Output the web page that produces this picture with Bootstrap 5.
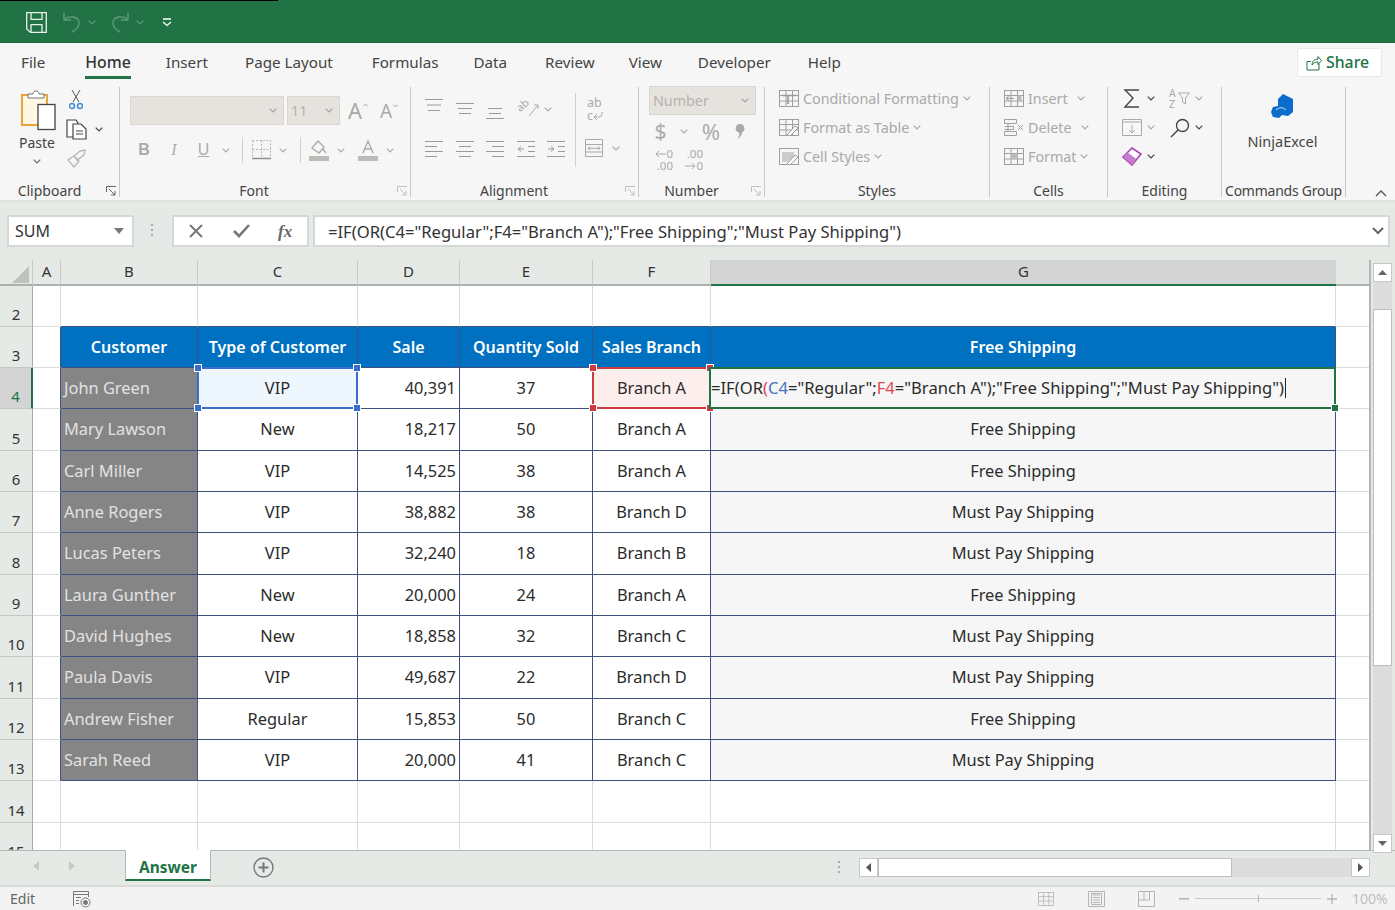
<!DOCTYPE html>
<html lang="en"><head><meta charset="utf-8"><title>Excel</title>
<link href="https://cdn.jsdelivr.net/npm/bootstrap@5.3.0/dist/css/bootstrap.min.css" rel="stylesheet">
<style>
html,body{margin:0;height:910px;overflow:hidden;background:#f6f6f6}
body{font-family:"Noto Sans","Open Sans",sans-serif;color:#444;width:1395px}
svg{display:block;flex:none}
.g1{margin-left:1px}.g2{margin-left:2px}.g3{margin-left:3px}.g4{margin-left:4px}.g5{margin-left:5px}.g8{margin-left:8px}.g9{margin-left:9px}.g10{margin-left:10px}.g12{margin-left:12px}.g13{margin-left:13px}.g14{margin-left:14px}.g18{margin-left:18px}.g19{margin-left:19px}
.xl-title{height:43px;background:#217346;border-bottom:1px solid #1c6a3f}
.xl-blk{height:1px;width:278px;background:#000}
.xl-tbar{padding:11px 0 0 26px;height:42px}
.xl-tabs{height:42px}
.xl-tab{position:relative;font-size:15.2px;color:#444;line-height:20px;margin-top:9px;height:29px}
.xl-tab.on{color:#333;font-weight:500;font-size:15.8px}
.xl-tab.on::after{content:"";position:absolute;left:0;right:0;top:24px;height:3px;background:#217346}
.t1{margin-right:40px}.t2{margin-right:35px}.t3{margin-right:37px}.t4{margin-right:39px}.t5{margin-right:35px}.t6{margin-right:38px}.t7{margin-right:34px}.t8{margin-right:36px}.t9{margin-right:37px}
.xl-share{width:85px;height:29px;margin:5px 13px 0 auto;padding-left:8px;background:#fff;border:1px solid #e9e9e9;color:#217346;font-size:15.8px;font-weight:500;border-radius:2px}
.xl-ribbon{height:117px;padding-top:2px;border-bottom:2px solid #dfe2df}
.rgrp{height:110px;border-right:1.5px solid #c8c8c4;flex:none}
.w1{width:120px}.w2{width:291px}.w3{width:228px}.w4{width:126px}.w5{width:225px}.w6{width:118px}.w7{width:114px}.w8{width:124px}
.rbody{height:94px;flex:none}
.rlabel{height:16px;line-height:20px;font-size:14px;color:#444;text-align:center;position:relative;white-space:nowrap}
.pr20{padding-right:20px}.pr22{padding-right:22px}.pr21{padding-right:21px}
.launch{position:absolute;right:2px;top:5px}
.rrows{margin-top:-3px;height:97px}
.rrow{height:29px}
.clip-rows{margin-top:-2px}
.clip-rows .rrow{height:29.5px}
.dis{color:#a9a9a9;font-size:14.3px;line-height:20px;white-space:nowrap}
.combo{height:29px;background:#e6e3df;border:1px solid #dad7d3;color:#b5b2ae;font-size:14.3px;padding:0 6px 0 3px}
.c154{width:154px;margin:9px 0 0 10px}.c53{width:53px;margin:9px 0 0 3px}.c106{width:107px;margin:-1px 0 0 10px}
.glyph{color:#ababab;text-align:center;line-height:20px}
.dec{font-size:11.5px;line-height:12px;color:#aaa;white-space:nowrap;width:21px}
.wrapg{width:19px;height:26px;font-size:12.5px;line-height:13px;color:#aaa;white-space:nowrap}
.rot{display:block;font-size:11px;line-height:12px;color:#aaa;transform:rotate(-40deg);width:13px;flex:none}
.azc{font-size:10.5px;line-height:11px;color:#aaa;width:9px;flex:none}
.xl-bar{height:58px;background:#e6eae6;padding:13px 0 0 7px}
.xl-box{height:32px;background:#fff;border:2px solid #d5d9d5;font-size:16px;color:#333;line-height:27px}
.nbox{width:127px;padding-left:6px}
.fbox{width:137px}
.ibox{width:1077px;padding-left:13px;font-size:16.6px}
.vsep{width:1px;background:#cfcfcb}
.xl-main{height:590px;background:#e6eae6}
.xl-wrap{width:1371px;height:590px;overflow:hidden;border-right:2px solid #b4b6b4;background:#fff}
.sheet-tbl{width:1370px;table-layout:fixed;border-collapse:separate;border-spacing:0;font-size:16.4px;color:#2b2b2b;background:#fff}
.sheet-tbl th,.sheet-tbl td{padding:0;height:41px;border-right:1px solid #dcdcdc;border-bottom:1px solid #dcdcdc;text-align:center;white-space:nowrap;position:relative}
.sheet-tbl tr.t42>*{height:42px}
.sheet-tbl thead th{height:26px;padding-bottom:3px;background:#e6eae6;font-weight:400;font-size:15px;color:#333;border-right:1px solid #c8cac8;border-bottom:2px solid #aeb0ae;line-height:20px}
.sheet-tbl thead th.gh{background:#d4d4d4;border-bottom:2px solid #217346;border-right:0}
.sheet-tbl thead th.hh{border-right:0}
.sheet-tbl th.rn{background:#e6eae6;font-weight:400;font-size:15px;color:#333;border-right:1px solid #a9aba9;border-bottom:1px solid #c6c8c6;vertical-align:bottom;line-height:22px;padding-bottom:1px}
.sheet-tbl th.rn.sel{background:#d4d4d4;color:#217346;border-right:2px solid #217346}
.sheet-tbl td.ed{border-right:1px solid #3d5080}
.sheet-tbl td.eb{border-bottom:1px solid #3d5080}
.sheet-tbl td.hd{background:#0070c0;color:#fff;font-weight:600;font-size:16px;border-right:1px solid #3d5080;border-bottom:1px solid #3d5080}
.sheet-tbl td.hd:last-of-type{border-right:0}
.sheet-tbl td.nm{background:#858585;color:#e2e2e2;text-align:left;padding-left:3px;border-right:1px solid #3d5080;border-bottom:1px solid #3d5080}
.sheet-tbl td.dc{border-right:1px solid #3d5080;border-bottom:1px solid #3d5080}
.sheet-tbl td.sl{background:#f6f6f6}
.sheet-tbl td.rt{text-align:right;padding-right:3px}
.ovl{position:absolute;left:-1px;right:-1px;top:-1px;bottom:-1px;display:flex;align-items:center;justify-content:center;border:2px solid;z-index:2}
.ovb{border-color:#3a6fc9;background:#eef6fe}
.ovr{border-color:#cf3a40;background:#fdeeee}
.ovg{left:-2px;border-color:#217346;background:#f6f6f6;justify-content:flex-start;z-index:3;font-size:16.6px}
.hdl{position:absolute;width:8px;height:8px;border:1px solid #fff;z-index:4}
.ovb .hdl{background:#3a6fc9}.ovr .hdl{background:#cf3a40}.ovg .hdl{background:#217346}
.tl{left:-5px;top:-5px}.tr{right:-5px;top:-5px}.bl{left:-5px;bottom:-5px}.br{right:-5px;bottom:-5px}
.rb{color:#4472c4}.rr{color:#e0484d}.cursr{display:inline-block;width:1px;height:20px;background:#222;margin-left:1px;vertical-align:-4px}
.vsb{width:22px;margin-left:2px;height:590px;padding-top:3px}
.sbtn{width:19px;height:19px;background:#fff;border:1px solid #c6c8c6;flex:none}
.strack{background:#dcdcdc;width:19px;height:552px;flex:none;padding-top:27px}
.sthumb{width:19px;height:357px;background:#fff;border:1px solid #bcbebc}
.xl-sheets{height:35px;background:#e6eae6;border-top:1px solid #b4b6b4;border-bottom:0}
.stab{width:86px;height:31px;margin:-1px 0 0 0;background:#fff;border:1px solid #b4b6b4;border-top-color:#fff;border-bottom:2px solid #217346;color:#217346;font-weight:700;font-size:15.5px;line-height:32px;text-align:center}
.hsb{width:511px;height:19px;margin-top:7px;margin-left:16px}
.hthumb{width:355px;height:19px;background:#fff;border:1px solid #bcbebc}
.htrack{width:120px;height:19px;background:#dcdcdc}
.xl-status{height:25px;background:#f3f3f3;border-top:2px solid #d9dcd9;font-size:14px;color:#666;line-height:22px;padding-left:10px}
.zm{color:#bdbdbd;font-size:14px;margin-left:15px}
.sld{width:126px;height:1px;background:#c9c9c9;position:relative}
.sld i{position:absolute;left:63px;top:-3px;width:1px;height:7px;background:#b5b5b5}
</style></head><body>
<svg width="0" height="0" class="position-absolute"><defs>
<symbol id="car" viewBox="0 0 8 5"><path d="M.7.7 4 4 7.3.7" fill="none" stroke="currentColor" stroke-width="1.2"/></symbol>
<symbol id="atop" viewBox="0 0 18 24"><path d="M0 3.500h18M2 9h14M3 14.500h12" stroke="currentColor" fill="none"/></symbol>
<symbol id="amid" viewBox="0 0 18 24"><path d="M0 7.500h18M2 12.500h14M3 17.500h12" stroke="currentColor" fill="none"/></symbol>
<symbol id="abot" viewBox="0 0 18 24"><path d="M2 12.500h14M3 17.500h12M0 22.500h18" stroke="currentColor" fill="none"/></symbol>
<symbol id="al" viewBox="0 0 18 20"><path d="M0 2.500h18M0 7.500h12M0 12.500h18M0 17.500h12" stroke="currentColor" fill="none"/></symbol>
<symbol id="ac" viewBox="0 0 18 20"><path d="M0 2.500h18M3 7.500h12M0 12.500h18M3 17.500h12" stroke="currentColor" fill="none"/></symbol>
<symbol id="ar" viewBox="0 0 18 20"><path d="M0 2.500h18M6 7.500h12M0 12.500h18M6 17.500h12" stroke="currentColor" fill="none"/></symbol>
<symbol id="tbl" viewBox="0 0 20 17"><rect x=".5" y=".5" width="19" height="16" fill="none" stroke="currentColor"/><path d="M.5 5.500h19M.5 11h19M7 .5v16M13.500.5v16" stroke="currentColor" fill="none"/></symbol>
<symbol id="lnc" viewBox="0 0 11 11"><path d="M.5 6V.5H10M3 3l6 6M9 5v4H5" fill="none" stroke="currentColor"/></symbol>
</defs></svg>

<header class="xl-title">
<div class="xl-blk"></div>
<div class="xl-tbar d-flex align-items-start">
<svg width="21" height="21" viewBox="0 0 21 21" fill="none" stroke="#e8f0eb" stroke-width="1.3"><path d="M.7.7h19.600v19.600H4.500L.7 17z"/><path d="M5 .7v6.600h11V.7M5 20.300v-7.600h11v7.600"/></svg>
<svg class="g14" width="22" height="21" viewBox="0 0 22 21" fill="none" stroke="#5c9a7b" stroke-width="1.4"><path d="M3 1v7h7M3 8c4-5 15-4 15 3 0 4-3 7-7 9"/></svg>
<svg class="g5" style="color:#5c9a7b;margin-top:8px" width="8" height="5"><use href="#car"/></svg>
<svg class="g13" width="22" height="21" viewBox="0 0 22 21" fill="none" stroke="#5c9a7b" stroke-width="1.4"><path d="M19 1v7h-7M19 8c-4-5-15-4-15 3 0 4 3 7 7 9"/></svg>
<svg class="g5" style="color:#5c9a7b;margin-top:8px" width="8" height="5"><use href="#car"/></svg>
<svg class="g18" style="margin-top:6px" width="10" height="9" viewBox="0 0 10 9" fill="none" stroke="#fff" stroke-width="1.3"><path d="M1 1h8M1 4l4 3.500L9 4"/></svg>
</div>
</header>

<nav class="xl-tabs d-flex" style="padding-left:21px">
<span class="xl-tab t1">File</span><span class="xl-tab on t2">Home</span><span class="xl-tab t3">Insert</span><span class="xl-tab t4">Page Layout</span><span class="xl-tab t5">Formulas</span><span class="xl-tab t6">Data</span><span class="xl-tab t7">Review</span><span class="xl-tab t8">View</span><span class="xl-tab t9">Developer</span><span class="xl-tab">Help</span>
<div class="xl-share d-flex align-items-center gap-1">
<svg width="16" height="16" viewBox="0 0 16 16" fill="none" stroke="#217346"><path d="M1 6.500v8.500h12V9M1 6.500h4M6 10c0-4 3-6 6-6V1.500l3.500 4-3.500 4V7c-3 0-5 1-6 3z"/></svg>Share</div>
</nav>

<section class="xl-ribbon d-flex">
<div class="rgrp w1 d-flex flex-column">
<div class="rbody d-flex">
 <div class="d-flex flex-column align-items-center" style="margin-left:17px;width:40px">
  <svg class="g4" style="margin-top:3px" width="36" height="41" viewBox="0 0 36 41"><rect x="1" y="5" width="25" height="30" fill="#fff6e4" stroke="#e8a33d" stroke-width="2"/><path d="M7 8V4h5c0-4 6-4 6 0h5v4z" fill="#fff" stroke="#777"/><rect x="17" y="14.500" width="17" height="25" fill="#fff" stroke="#444" stroke-width="1.3"/></svg>
  <span style="font-size:14px;line-height:20px;margin-top:2px">Paste</span>
  <svg style="color:#666;margin-top:6px" width="8" height="5"><use href="#car"/></svg>
 </div>
 <div class="clip-rows g9">
  <div class="rrow d-flex align-items-center"><svg class="g3" width="14" height="21" viewBox="0 0 14 21" fill="none" stroke="#555"><path d="M3 1l7 12M11 1L4 13"/><circle cx="3" cy="17" r="2.500" stroke="#3f8fd6" stroke-width="1.500"/><circle cx="11" cy="17" r="2.500" stroke="#3f8fd6" stroke-width="1.500"/></svg></div>
  <div class="rrow d-flex align-items-center"><svg width="21" height="21" viewBox="0 0 21 21" fill="#fff" stroke="#444" stroke-width="1.200"><path d="M1 1h9l2 3v14H1z"/><path d="M7 5h8l5 5v10H7zM10 12h7M10 15h7"/></svg><svg class="g8" style="color:#444" width="8" height="5"><use href="#car"/></svg></div>
  <div class="rrow d-flex align-items-center"><svg class="g1" width="20" height="19" viewBox="0 0 20 19" fill="none" stroke="#b5b5b5" stroke-width="1.300"><path d="M13 2l5-1-1 5-7 5-3-4zM7 7L1 11l6 7 5-6z"/></svg></div>
 </div>
</div>
<div class="rlabel pr20">Clipboard<svg class="launch" style="color:#666" width="11" height="11"><use href="#lnc"/></svg></div>
</div>

<div class="rgrp w2 d-flex flex-column">
<div class="rbody">
 <div class="d-flex align-items-start">
  <div class="combo c154 d-flex align-items-center justify-content-end"><svg style="color:#a5a29e" width="8" height="5"><use href="#car"/></svg></div>
  <div class="combo c53 d-flex align-items-center justify-content-between">11<svg style="color:#a5a29e" width="8" height="5"><use href="#car"/></svg></div>
  <span class="glyph g8 d-flex" style="font-size:22px;margin-top:13px;width:19px;color:#a9a9a9">A<svg class="g1" style="margin-top:3px" width="5" height="4" viewBox="0 0 5 4" fill="none" stroke="#a9a9a9"><path d="M0 3.500 2.500 1 5 3.500"/></svg></span>
  <span class="glyph g13 d-flex" style="font-size:19px;margin-top:14px;width:17px;color:#a9a9a9">A<svg class="g1" style="margin-top:3px" width="5" height="4" viewBox="0 0 5 4" fill="none" stroke="#a9a9a9"><path d="M0 .5 2.500 3 5 .5"/></svg></span>
 </div>
 <div class="d-flex align-items-center" style="margin-top:15px;height:20px;padding-left:18px">
  <span class="glyph fw-bold" style="width:12px;font-size:16px;font-family:'Liberation Sans',sans-serif">B</span>
  <span class="glyph g19 fst-italic" style="width:10px;font-size:16px;font-family:'Liberation Serif',serif">I</span>
  <span class="glyph g18" style="width:13px;font-size:16px;text-decoration:underline;font-family:'Liberation Sans',sans-serif">U</span>
  <svg class="g12" style="color:#aaa" width="8" height="5"><use href="#car"/></svg>
  <span class="vsep g12" style="height:26px"></span>
  <svg class="g9" width="19" height="20" viewBox="0 0 19 20" fill="none" stroke="#b5b5b5"><path d="M.5.5h18v18H.5zM9.500.5v18M.5 9.500h18" stroke-dasharray="2 1.500"/><path d="M0 18.500h19" stroke="#8f8f8f" stroke-width="1.500"/></svg>
  <svg class="g8" style="color:#aaa" width="8" height="5"><use href="#car"/></svg>
  <span class="vsep g13" style="height:26px"></span>
  <svg class="g8" width="20" height="22" viewBox="0 0 20 22"><path d="M3 9l6-7 6 6-5 6z M14 10l3 4" fill="none" stroke="#aaa" stroke-width="1.300"/><rect y="17" width="20" height="5" fill="#bcbcb6"/></svg>
  <svg class="g8" style="color:#aaa" width="8" height="5"><use href="#car"/></svg>
  <svg class="g13" width="20" height="22" viewBox="0 0 20 22"><path d="M5 14 10 2l5 12M6.500 10h7" fill="none" stroke="#aaa" stroke-width="1.400"/><rect y="17" width="20" height="5" fill="#bcbcb6"/></svg>
  <svg class="g8" style="color:#aaa" width="8" height="5"><use href="#car"/></svg>
 </div>
</div>
<div class="rlabel pr22">Font<svg class="launch" style="color:#c0c0c0" width="11" height="11"><use href="#lnc"/></svg></div>
</div>

<div class="rgrp w3 d-flex flex-column">
<div class="rbody d-flex" style="padding-top:9px">
 <div style="width:164px;padding-left:14px;color:#9a9a9a">
  <div class="d-flex align-items-start" style="height:24px">
   <svg width="18" height="24"><use href="#atop"/></svg><svg class="g13" width="18" height="24"><use href="#amid"/></svg><svg class="g12" width="18" height="24"><use href="#abot"/></svg>
   <span class="rot g12" style="margin-top:3px">ab</span>
   <svg style="margin-top:3px" width="10" height="20" viewBox="0 0 10 20" fill="none" stroke="#aaa"><path d="M0 17 9 6M9 6H5M9 6v4"/></svg>
   <svg class="g5" style="color:#aaa;margin-top:11px" width="8" height="5"><use href="#car"/></svg>
  </div>
  <div class="d-flex align-items-start" style="margin-top:19px;height:20px">
   <svg width="18" height="20"><use href="#al"/></svg><svg class="g13" width="18" height="20"><use href="#ac"/></svg><svg class="g12" width="18" height="20"><use href="#ar"/></svg>
   <svg class="g13" width="18" height="20" viewBox="0 0 18 20" fill="none" stroke="currentColor"><path d="M0 2.500h18M11 7.500h7M11 12.500h7M0 17.500h18M7 10H1M4 7.500 1 10l3 2.500" /></svg>
   <svg class="g12" width="18" height="20" viewBox="0 0 18 20" fill="none" stroke="currentColor"><path d="M0 2.500h18M11 7.500h7M11 12.500h7M0 17.500h18M1 10h6M4 7.500 7 10l-3 2.500"/></svg>
  </div>
 </div>
 <span class="vsep" style="height:74px;margin-top:-3px"></span>
 <div class="g9">
  <div class="g2 wrapg" >ab<div class="d-flex align-items-center">c<svg width="10" height="8" viewBox="0 0 10 8" fill="none" stroke="#aaa"><path d="M9 0v2a3 3 0 0 1-3 3H1M1 5l3-3M1 5l3 3"/></svg></div></div>
  <div class="d-flex align-items-center" style="margin-top:17px">
   <svg width="18" height="18" viewBox="0 0 18 18" fill="none" stroke="#aaa"><path d="M.5.5h17v17H.5zM.5 5.500h17M.5 13h17M3 9.300h12M3 9.300l2-2M3 9.300l2 2M15 9.300l-2-2M15 9.300l-2 2"/></svg>
   <svg class="g9" style="color:#aaa" width="8" height="5"><use href="#car"/></svg>
  </div>
 </div>
</div>
<div class="rlabel pr21">Alignment<svg class="launch" style="color:#c0c0c0" width="11" height="11"><use href="#lnc"/></svg></div>
</div>

<div class="rgrp w4 d-flex flex-column">
<div class="rbody">
 <div class="combo c106 d-flex align-items-center justify-content-between">Number<svg style="color:#a5a29e" width="8" height="5"><use href="#car"/></svg></div>
 <div class="d-flex align-items-center" style="height:22px;margin-top:5px;padding-left:15px">
  <span class="glyph" style="font-size:21px;width:13px">$</span>
  <svg class="g13" style="color:#aaa" width="8" height="5"><use href="#car"/></svg>
  <span class="glyph g13" style="font-size:22px;width:20px">%</span>
  <svg class="g14" width="11" height="17" viewBox="0 0 11 17"><path d="M5 1a4.500 4.500 0 0 1 2 8.500C7 12 5 15 2 16c2-2 3-4 2-6.500A4.300 4.300 0 0 1 5 1z" fill="#a9a9a9"/></svg>
 </div>
 <div class="d-flex align-items-center" style="height:24px;margin-top:6px;padding-left:13px">
  <div class="dec"><div class="d-flex align-items-center justify-content-end"><svg width="11" height="8" viewBox="0 0 11 8" fill="none" stroke="#aaa"><path d="M11 4H1M1 4l3-3M1 4l3 3"/></svg>0</div><div class="text-end">.00</div></div>
  <div class="dec g9"><div class="text-end">.00</div><div class="d-flex align-items-center justify-content-end"><svg width="11" height="8" viewBox="0 0 11 8" fill="none" stroke="#aaa"><path d="M0 4h10M10 4 7 1M10 4 7 7"/></svg>0</div></div>
 </div>
</div>
<div class="rlabel pr20">Number<svg class="launch" style="color:#c0c0c0" width="11" height="11"><use href="#lnc"/></svg></div>
</div>

<div class="rgrp w5 d-flex flex-column">
<div class="rbody rrows" style="padding-left:14px">
 <div class="rrow d-flex align-items-center dis"><svg style="color:#a0a0a0" width="20" height="17" viewBox="0 0 20 17"><use href="#tbl"/><path d="M3 5.500h14M9 5.500V14" stroke="#999" stroke-width="1.600"/></svg><span class="g4">Conditional Formatting</span><svg class="g4" style="color:#aaa" width="8" height="5"><use href="#car"/></svg></div>
 <div class="rrow d-flex align-items-center dis"><svg style="color:#a0a0a0" width="20" height="17" viewBox="0 0 20 17"><use href="#tbl"/><path d="M8 16l8-9 3 2-8 8z" fill="#fff" stroke="#999"/></svg><span class="g4">Format as Table</span><svg class="g4" style="color:#aaa" width="8" height="5"><use href="#car"/></svg></div>
 <div class="rrow d-flex align-items-center dis"><svg style="color:#a0a0a0" width="20" height="17" viewBox="0 0 20 17"><rect x=".5" y=".5" width="19" height="16" fill="none" stroke="currentColor"/><path d="M.5.500h19M3 4h12v5l-7 5H3z" fill="#ccc"/><path d="M8 16l8-9 3 2-8 8z" fill="#fff" stroke="#999"/></svg><span class="g4">Cell Styles</span><svg class="g4" style="color:#aaa" width="8" height="5"><use href="#car"/></svg></div>
</div>
<div class="rlabel">Styles</div>
</div>

<div class="rgrp w6 d-flex flex-column">
<div class="rbody rrows" style="padding-left:14px">
 <div class="rrow d-flex align-items-center dis"><svg style="color:#a0a0a0" width="20" height="17" viewBox="0 0 20 17"><use href="#tbl"/><rect x="13.500" y="5.500" width="4" height="5.500" fill="#bbb"/><path d="M10 8.300H2M2 8.300l3-2.500M2 8.300l3 2.500" stroke="#999" fill="none"/></svg><span class="g4">Insert</span><svg class="g9" style="color:#aaa" width="8" height="5"><use href="#car"/></svg></div>
 <div class="rrow d-flex align-items-center dis"><svg style="color:#a0a0a0" width="20" height="17" viewBox="0 0 20 17"><path d="M.5.500h12v4h-12zM.5 12.500h12v4h-12zM4 4.500v8M.5 7.500h9v3h-9M14 6l5 5M19 6l-5 5" fill="none" stroke="currentColor"/></svg><span class="g4">Delete</span><svg class="g10" style="color:#aaa" width="8" height="5"><use href="#car"/></svg></div>
 <div class="rrow d-flex align-items-center dis"><svg style="color:#a0a0a0" width="20" height="17" viewBox="0 0 20 17"><use href="#tbl"/><rect x="7" y="5.500" width="6.500" height="5.500" fill="#bbb"/></svg><span class="g4">Format</span><svg class="g3" style="color:#aaa" width="8" height="5"><use href="#car"/></svg></div>
</div>
<div class="rlabel">Cells</div>
</div>

<div class="rgrp w7 d-flex flex-column">
<div class="rbody rrows" style="padding-left:14px">
 <div class="rrow d-flex align-items-center"><svg width="20" height="19" viewBox="0 0 20 19" fill="none" stroke="#444" stroke-width="1.400"><path d="M17 1H3l8 8-8 9h14"/></svg><svg class="g5" style="color:#444" width="8" height="5"><use href="#car"/></svg>
  <div class="azc g14">A<br>Z</div><svg width="12" height="13" viewBox="0 0 12 13" fill="none" stroke="#aaa"><path d="M.5 1h11l-4 5v6l-3-2V6z"/></svg><svg class="g5" style="color:#aaa" width="8" height="5"><use href="#car"/></svg></div>
 <div class="rrow d-flex align-items-center"><svg width="20" height="17" viewBox="0 0 20 17" fill="none" stroke="#aaa"><path d="M.5.500h19v16H.5zM.5 3h19M10 6v8M7 11l3 3 3-3"/></svg><svg class="g5" style="color:#aaa" width="8" height="5"><use href="#car"/></svg>
  <svg class="g14" width="21" height="20" viewBox="0 0 21 20" fill="none" stroke="#444" stroke-width="1.400"><circle cx="13.500" cy="7.500" r="6"/><path d="M9 12l-7 7"/></svg><svg class="g5" style="color:#444" width="8" height="5"><use href="#car"/></svg></div>
 <div class="rrow d-flex align-items-center"><svg width="20" height="19" viewBox="0 0 20 19"><path d="M1 10 10 1l9 6-9 11z" fill="#fff" stroke="#a83fb2" stroke-width="1.600"/><path d="M1 10 5.500 5.500l9 6.500L10 18z" fill="#c57ccb"/></svg><svg class="g5" style="color:#444" width="8" height="5"><use href="#car"/></svg></div>
</div>
<div class="rlabel">Editing</div>
</div>

<div class="rgrp w8 d-flex flex-column">
<div class="rbody d-flex flex-column align-items-center">
 <svg style="margin-top:7px;margin-left:-2px" width="24" height="26" viewBox="0 0 24 26"><path d="M12 0l10 5v13l-5 4-6-1-3 3-6-1-2-5 2-5 5-1V5z" fill="#0a6ccb"/><path d="M5 16c3-3 7-3 10 0" stroke="#fff" stroke-width=".8" fill="none"/></svg>
 <span style="font-size:14.500px;line-height:20px;margin-top:11px;margin-left:-2px">NinjaExcel</span>
</div>
<div class="rlabel" style="letter-spacing:-.25px">Commands Group</div>
</div>
<svg style="margin:103px 0 0 29px" width="12" height="7" viewBox="0 0 12 7" fill="none" stroke="#555" stroke-width="1.300"><path d="M1 6l5-5 5 5"/></svg>
</section>

<section class="xl-bar d-flex align-items-start">
 <div class="xl-box nbox d-flex justify-content-between align-items-center">SUM<svg class="me-2" width="10" height="6" viewBox="0 0 10 6"><path d="M0 0h10L5 6z" fill="#777"/></svg></div>
 <svg style="margin:9px 0 0 17px" width="3" height="14" viewBox="0 0 3 14" fill="#aaa"><rect width="2" height="2"/><rect y="5" width="2" height="2"/><rect y="10" width="2" height="2"/></svg>
 <div class="xl-box fbox d-flex align-items-center" style="margin-left:18px">
  <svg style="margin-left:15px" width="14" height="14" viewBox="0 0 14 14" stroke="#777" stroke-width="2"><path d="M1 1l12 12M13 1 1 13"/></svg>
  <svg style="margin-left:30px" width="17" height="14" viewBox="0 0 17 14" fill="none" stroke="#777" stroke-width="2.600"><path d="M1 7l5 5L16 1"/></svg>
  <span class="fst-italic" style="margin-left:28px;font-family:'Liberation Serif',serif;font-size:17px;color:#666;font-weight:700">fx</span>
 </div>
 <div class="xl-box ibox g4 d-flex justify-content-between align-items-center">=IF(OR(C4="Regular";F4="Branch A");"Free Shipping";"Must Pay Shipping")<svg class="me-1" width="12" height="8" viewBox="0 0 12 8" fill="none" stroke="#666" stroke-width="2"><path d="M1 1l5 5 5-5"/></svg></div>
</section>

<main class="xl-main d-flex">
<div class="xl-wrap">
<table class="sheet-tbl">
<colgroup><col width="33"><col width="28"><col width="137"><col width="160"><col width="102"><col width="133"><col width="118"><col width="625"><col width="34"></colgroup>
<thead><tr><th><svg style="position:absolute;left:12px;top:6px" width="17" height="17" viewBox="0 0 17 17"><path d="M17 0v17H0z" fill="#bfc3bf"/></svg></th><th>A</th><th>B</th><th>C</th><th>D</th><th>E</th><th>F</th><th class="gh">G</th><th class="hh"></th></tr></thead>
<tbody>
<tr><th class="rn">2</th><td></td><td class="eb"></td><td class="eb"></td><td class="eb"></td><td class="eb"></td><td class="eb"></td><td class="eb"></td><td></td></tr>
<tr><th class="rn">3</th><td class="ed"></td><td class="hd">Customer</td><td class="hd">Type of Customer</td><td class="hd">Sale</td><td class="hd">Quantity Sold</td><td class="hd">Sales Branch</td><td class="hd">Free Shipping</td><td></td></tr>
<tr><th class="rn sel">4</th><td class="ed"></td><td class="nm">John Green</td><td class="dc"><div class="ovl ovb">VIP<i class="hdl tl"></i><i class="hdl tr"></i><i class="hdl bl"></i><i class="hdl br"></i></div></td><td class="dc rt">40,391</td><td class="dc">37</td><td class="dc"><div class="ovl ovr">Branch A<i class="hdl tl"></i><i class="hdl tr"></i><i class="hdl bl"></i><i class="hdl br"></i></div></td><td class="dc sl"><div class="ovl ovg">=IF(OR<span class="rr">(</span><span class="rb">C4</span>="Regular";<span class="rr">F4</span>="Branch A");"Free Shipping";"Must Pay Shipping")<span class="cursr"></span><i class="hdl br"></i></div></td><td></td></tr>
<tr class="t42"><th class="rn">5</th><td class="ed"></td><td class="nm">Mary Lawson</td><td class="dc">New</td><td class="dc rt">18,217</td><td class="dc">50</td><td class="dc">Branch A</td><td class="dc sl">Free Shipping</td><td></td></tr>
<tr><th class="rn">6</th><td class="ed"></td><td class="nm">Carl Miller</td><td class="dc">VIP</td><td class="dc rt">14,525</td><td class="dc">38</td><td class="dc">Branch A</td><td class="dc sl">Free Shipping</td><td></td></tr>
<tr><th class="rn">7</th><td class="ed"></td><td class="nm">Anne Rogers</td><td class="dc">VIP</td><td class="dc rt">38,882</td><td class="dc">38</td><td class="dc">Branch D</td><td class="dc sl">Must Pay Shipping</td><td></td></tr>
<tr class="t42"><th class="rn">8</th><td class="ed"></td><td class="nm">Lucas Peters</td><td class="dc">VIP</td><td class="dc rt">32,240</td><td class="dc">18</td><td class="dc">Branch B</td><td class="dc sl">Must Pay Shipping</td><td></td></tr>
<tr><th class="rn">9</th><td class="ed"></td><td class="nm">Laura Gunther</td><td class="dc">New</td><td class="dc rt">20,000</td><td class="dc">24</td><td class="dc">Branch A</td><td class="dc sl">Free Shipping</td><td></td></tr>
<tr><th class="rn">10</th><td class="ed"></td><td class="nm">David Hughes</td><td class="dc">New</td><td class="dc rt">18,858</td><td class="dc">32</td><td class="dc">Branch C</td><td class="dc sl">Must Pay Shipping</td><td></td></tr>
<tr class="t42"><th class="rn">11</th><td class="ed"></td><td class="nm">Paula Davis</td><td class="dc">VIP</td><td class="dc rt">49,687</td><td class="dc">22</td><td class="dc">Branch D</td><td class="dc sl">Must Pay Shipping</td><td></td></tr>
<tr><th class="rn">12</th><td class="ed"></td><td class="nm">Andrew Fisher</td><td class="dc">Regular</td><td class="dc rt">15,853</td><td class="dc">50</td><td class="dc">Branch C</td><td class="dc sl">Free Shipping</td><td></td></tr>
<tr><th class="rn">13</th><td class="ed"></td><td class="nm">Sarah Reed</td><td class="dc">VIP</td><td class="dc rt">20,000</td><td class="dc">41</td><td class="dc">Branch C</td><td class="dc sl">Must Pay Shipping</td><td></td></tr>
<tr class="t42"><th class="rn">14</th><td></td><td></td><td></td><td></td><td></td><td></td><td></td><td></td></tr>
<tr><th class="rn">15</th><td></td><td></td><td></td><td></td><td></td><td></td><td></td><td></td></tr>
</tbody></table>
</div>
<aside class="vsb d-flex flex-column">
 <div class="sbtn d-flex align-items-center justify-content-center"><svg width="9" height="5" viewBox="0 0 9 5"><path d="M0 5h9L4.500 0z" fill="#666"/></svg></div>
 <div class="strack"><div class="sthumb"></div></div>
 <div class="sbtn d-flex align-items-center justify-content-center"><svg width="9" height="5" viewBox="0 0 9 5"><path d="M0 0h9L4.500 5z" fill="#666"/></svg></div>
</aside>
</main>

<section class="xl-sheets d-flex align-items-start">
 <svg style="margin:10px 0 0 33px" width="6" height="10" viewBox="0 0 6 10"><path d="M6 0v10L0 5z" fill="#c6cac6"/></svg>
 <svg style="margin:10px 0 0 30px" width="6" height="10" viewBox="0 0 6 10"><path d="M0 0v10l6-5z" fill="#c6cac6"/></svg>
 <div class="stab" style="margin-left:50px">Answer</div>
 <svg style="margin:6px 0 0 42px" width="21" height="21" viewBox="0 0 21 21" fill="none" stroke="#777" stroke-width="1.400"><circle cx="10.500" cy="10.500" r="9.500"/><path d="M10.500 5.500v10M5.500 10.500h10" stroke-width="2"/></svg>
 <svg style="margin:10px 0 0 564px" width="3" height="13" viewBox="0 0 3 13" fill="#aaa"><rect width="2" height="2"/><rect y="5" width="2" height="2"/><rect y="10" width="2" height="2"/></svg>
 <div class="hsb d-flex" style="margin-left:18px">
  <div class="sbtn d-flex align-items-center justify-content-center"><svg width="5" height="9" viewBox="0 0 5 9"><path d="M5 0v9L0 4.500z" fill="#555"/></svg></div>
  <div class="hthumb"></div><div class="htrack"></div>
  <div class="sbtn d-flex align-items-center justify-content-center"><svg width="5" height="9" viewBox="0 0 5 9"><path d="M0 0v9l5-4.500z" fill="#555"/></svg></div>
 </div>
</section>

<footer class="xl-status d-flex align-items-center">
 <span>Edit</span>
 <svg style="margin-left:38px" width="18" height="18" viewBox="0 0 18 18" fill="none" stroke="#777"><path d="M.5 16V1.500h15V7M.5 4.500h15M3 7.500h5M3 10.500h3M3 13.500h3"/><circle cx="12.500" cy="12.500" r="4.500"/><circle cx="12.500" cy="12.500" r="2" fill="#777"/></svg>
 <svg style="margin-left:947px;color:#b5b5b5" width="16" height="16"><use href="#tbl"/></svg>
 <svg style="margin-left:34px" width="17" height="16" viewBox="0 0 17 16" fill="none" stroke="#b5b5b5"><path d="M.5.500h16v15H.5zM5 4h7M5 6.500h7M5 9h7M5 11.500h7M3.500 2.500h10v11h-10z"/></svg>
 <svg style="margin-left:33px" width="17" height="16" viewBox="0 0 17 16" fill="none" stroke="#b5b5b5"><path d="M.5.500h16v15H.5zM.5 9h11V.5M6 .5V9"/></svg>
 <svg style="margin-left:24px" width="10" height="2"><rect width="10" height="1.500" fill="#b5b5b5"/></svg>
 <div class="sld" style="margin-left:6px"><i></i></div>
 <svg style="margin-left:6px" width="10" height="10" viewBox="0 0 10 10" stroke="#b5b5b5" stroke-width="1.300"><path d="M0 5h10M5 0v10"/></svg>
 <span class="zm">100%</span>
</footer>
</body></html>
